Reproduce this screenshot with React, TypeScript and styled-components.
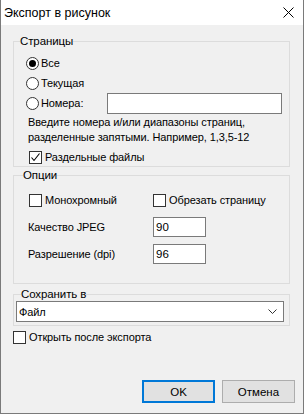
import styled, { createGlobalStyle } from "styled-components";

const GlobalStyle = createGlobalStyle`
  html, body {
    margin: 0;
    padding: 0;
    background: #f0f0f0;
  }
  body {
    font-family: "Liberation Sans", Arial, sans-serif;
    font-size: 11px;
    letter-spacing: -0.1px;
    color: #000;
  }
`;

function Radio({ checked }: { checked?: boolean }) {
  return <RadioCircle>{checked ? <RadioDot /> : null}</RadioCircle>;
}

function Check({ checked }: { checked?: boolean }) {
  return (
    <CheckBox>
      {checked ? (
        <svg width="11" height="11" viewBox="0 0 11 11">
          <polyline points="1.5,5.5 4,8.5 9.5,1.5" fill="none" stroke="#000" strokeWidth="1.1" />
        </svg>
      ) : null}
    </CheckBox>
  );
}

function App() {
  return (
    <>
      <GlobalStyle />
      <Window>
        <TitleBar>
          <Title>Экспорт в рисунок</Title>
          <CloseIcon width="11" height="11" viewBox="0 0 11 11">
            <path d="M0.5 0.5 L10.5 10.5 M10.5 0.5 L0.5 10.5" stroke="#000" strokeWidth="1" />
          </CloseIcon>
        </TitleBar>
        <Content>
          <Group $top={9}>
            <Legend $left={6}>Страницы</Legend>
            <GroupBody $pt={5} $pb={2} $pl={12}>
              <RadioRow>
                <Radio checked />
                <span>Все</span>
              </RadioRow>
              <RadioRow>
                <Radio />
                <span>Текущая</span>
              </RadioRow>
              <RadioRow>
                <RadioLabel>
                  <Radio />
                  <span>Номера:</span>
                </RadioLabel>
                <TextInput $width={175} $height={21} />
              </RadioRow>
              <Hint>
                Введите номера и/или диапазоны страниц,
                <br />
                разделенные запятыми. Например, 1,3,5-12
              </Hint>
              <CheckRow $indent={3}>
                <Check checked />
                <span>Раздельные файлы</span>
              </CheckRow>
            </GroupBody>
          </Group>

          <Group $top={1}>
            <Legend $left={9}>Опции</Legend>
            <GroupBody $pt={8} $pb={19} $pl={15}>
              <OptionsGrid>
                <CheckRow>
                  <Check />
                  <span>Монохромный</span>
                </CheckRow>
                <CheckRow>
                  <Check />
                  <span>Обрезать страницу</span>
                </CheckRow>
                <FieldLabel>Качество JPEG</FieldLabel>
                <TextInput $width={53} $height={20} defaultValue="90" />
                <FieldLabel>Разрешение (dpi)</FieldLabel>
                <TextInput $width={53} $height={20} defaultValue="96" />
              </OptionsGrid>
            </GroupBody>
          </Group>

          <Group $top={3}>
            <Legend $left={7}>Сохранить в</Legend>
            <GroupBody $pt={0} $pb={3} $pl={2}>
              <Combo>
                <span>Файл</span>
                <svg width="9" height="6" viewBox="0 0 9 6">
                  <polyline points="0.5,0.5 4.5,4.5 8.5,0.5" fill="none" stroke="#333" strokeWidth="1" />
                </svg>
              </Combo>
            </GroupBody>
          </Group>

          <CheckRow $indent={0} $top={4}>
            <Check />
            <span>Открыть после экспорта</span>
          </CheckRow>

          <Footer>
            <Button $primary>OK</Button>
            <Button>Отмена</Button>
          </Footer>
        </Content>
      </Window>
    </>
  );
}

const Window = styled.div`
  width: 304px;
  height: 414px;
  box-sizing: border-box;
  border: 1px solid #7a7a7a;
  border-top: none;
  background: #f0f0f0;
  display: flex;
  flex-direction: column;
`;

const TitleBar = styled.div`
  height: 25px;
  background: #fff;
  display: flex;
  align-items: center;
  justify-content: space-between;
  padding: 0 9px 0 3px;
  flex-shrink: 0;
`;

const Title = styled.div`
  font-size: 12.5px;
  letter-spacing: 0;
  line-height: 16px;
`;

const CloseIcon = styled.svg`
  display: block;
`;

const Content = styled.div`
  flex: 1;
  display: flex;
  flex-direction: column;
  padding: 0 8px 10px 12px;
`;

const Group = styled.fieldset<{ $top: number }>`
  margin: ${(p) => p.$top}px 0 0 0;
  width: 277px;
  box-sizing: border-box;
  padding: 0;
  border: 1px solid #dcdcdc;
  min-inline-size: 0;
`;

const Legend = styled.legend<{ $left: number }>`
  margin-left: ${(p) => p.$left}px;
  padding: 0;
  line-height: 14px;
  font-size: 11.5px;
`;

const GroupBody = styled.div<{ $pt: number; $pb: number; $pl: number }>`
  padding: ${(p) => p.$pt}px 0 ${(p) => p.$pb}px ${(p) => p.$pl}px;
  display: flex;
  flex-direction: column;
`;

const RadioRow = styled.div`
  height: 20px;
  display: flex;
  align-items: center;
  gap: 2px;
`;

const RadioLabel = styled.div`
  width: 79px;
  display: flex;
  align-items: center;
  gap: 2px;
`;

const RadioCircle = styled.span`
  width: 13px;
  height: 13px;
  box-sizing: border-box;
  border: 1px solid #333;
  border-radius: 50%;
  background: #fff;
  display: inline-flex;
  align-items: center;
  justify-content: center;
  flex-shrink: 0;
`;

const RadioDot = styled.span`
  width: 7px;
  height: 7px;
  border-radius: 50%;
  background: #000;
`;

const TextInput = styled.input<{ $width: number; $height: number }>`
  width: ${(p) => p.$width}px;
  height: ${(p) => p.$height}px;
  box-sizing: border-box;
  border: 1px solid #7a7a7a;
  background: #fff;
  font-family: "Liberation Sans", Arial, sans-serif;
  font-size: 11.5px;
  padding: 0 2px;
  outline: none;
`;

const Hint = styled.div`
  margin: 2px 0 0 2px;
  line-height: 15px;
`;

const CheckRow = styled.div<{ $indent?: number; $top?: number }>`
  display: flex;
  align-items: center;
  gap: 3px;
  height: 14px;
  margin-left: ${(p) => p.$indent ?? 0}px;
  margin-top: ${(p) => p.$top ?? 5}px;
`;

const CheckBox = styled.span`
  width: 13px;
  height: 13px;
  box-sizing: border-box;
  border: 1px solid #333;
  background: #fff;
  display: inline-flex;
  align-items: center;
  justify-content: center;
  flex-shrink: 0;
`;

const OptionsGrid = styled.div`
  display: grid;
  grid-template-columns: 124px 1fr;
  grid-auto-rows: 20px;
  row-gap: 7px;
  align-items: center;
  & > ${CheckRow} {
    margin-top: 0;
  }
`;

const FieldLabel = styled.span`
  margin-left: -1px;
`;

const Combo = styled.div`
  width: 268px;
  height: 21px;
  box-sizing: border-box;
  border: 1px solid #7a7a7a;
  background: #fff;
  display: flex;
  align-items: center;
  justify-content: space-between;
  padding: 0 6px 0 2px;
`;

const Footer = styled.div`
  margin-top: auto;
  display: flex;
  justify-content: flex-end;
  gap: 7px;
`;

const Button = styled.button<{ $primary?: boolean }>`
  width: 73px;
  height: 23px;
  box-sizing: border-box;
  background: #e1e1e1;
  border: ${(p) => (p.$primary ? "2px solid #0078d7" : "1px solid #adadad")};
  font-family: "Liberation Sans", Arial, sans-serif;
  font-size: 11.5px;
  color: #000;
  padding: 0;
`;

export default App;
